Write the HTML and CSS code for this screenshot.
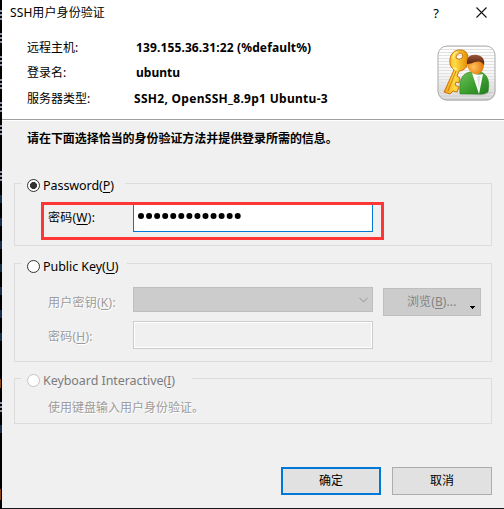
FILE: index.html
```html
<!DOCTYPE html>
<html lang="zh-CN">
<head>
<meta charset="utf-8">
<title>SSH用户身份验证</title>
<link rel="stylesheet" href="styles.css">
</head>
<body>
<div class="screen">
  <svg class="backdrop" width="2" height="509" viewBox="0 0 2 509">
    <rect width="2" height="509" fill="#000"/>
    <path d="M1 10V20M1 33V43M1 56V66M1 79V89M1 102V112M1 125V135M1 171V181M1 402V412" stroke="#8b91a8" stroke-width="2" stroke-dasharray="2 2"/>
    <path d="M1 195V203M1 218V226M1 241V249M1 264V272M1 287V295M1 310V318M1 333V341M1 425V433" stroke="#315b91" stroke-width="1"/>
    <path d="M.5 379V388M.5 489V500" stroke="#8c4313" stroke-width="1"/>
  </svg>
  <main class="dialog">
    <header class="header">
      <div class="titlebar">
        <span class="title">SSH用户身份验证</span>
        <span class="help">?</span>
        <svg class="close" width="11" height="11" viewBox="0 0 11 11"><path d="M.5.5l10 10M10.500.5l-10 10" stroke="#111" stroke-width="1.1"/></svg>
      </div>
      <div class="summary">
        <dl class="info">
          <dt>远程主机:</dt><dd class="host">139.155.36.31:22 (%default%)</dd>
          <dt>登录名:</dt><dd class="login">ubuntu</dd>
          <dt>服务器类型:</dt><dd class="server">SSH2, OpenSSH_8.9p1 Ubuntu-3</dd>
        </dl>
        <svg class="userkey" width="60" height="57" viewBox="0 0 60 57">
          <defs>
            <linearGradient id="tile" x2="0" y2="1"><stop stop-color="#fff"/><stop offset=".5" stop-color="#f7f7f7"/><stop offset="1" stop-color="#cfcfcf"/></linearGradient>
            <linearGradient id="gold"><stop stop-color="#f19a0b"/><stop offset=".45" stop-color="#ffdc45"/><stop offset="1" stop-color="#e58a00"/></linearGradient>
            <radialGradient id="face" cx=".4" cy=".6"><stop stop-color="#ffc35c"/><stop offset="1" stop-color="#e88012"/></radialGradient>
            <linearGradient id="green" x2="1" y2="1"><stop stop-color="#6fbf59"/><stop offset=".55" stop-color="#3b9e2e"/><stop offset="1" stop-color="#237c1e"/></linearGradient>
            <linearGradient id="hair" x2="0" y2="1"><stop stop-color="#9c5838"/><stop offset="1" stop-color="#54200c"/></linearGradient>
            <pattern id="lines" width="4" height="3" patternUnits="userSpaceOnUse"><path d="M0 1.500H4" stroke="#e2e2e2" stroke-width="1"/></pattern>
          </defs>
          <rect x=".7" y=".7" width="58" height="55" rx="9" fill="url(#tile)"/>
          <rect x="1" y="1" width="57" height="54" rx="9" fill="url(#lines)" stroke="#adadad"/>
          <path d="M23 49Q25 45 43 47T53 47Q50 51 38 50T23 49" fill="#9b9b9b" opacity=".5"/>
          <path fill-rule="evenodd" d="M24 5C17 4 12 10 13 18C13 21 15 23 17 25L8 45 7 47 13 49 16 46 20 47 22 42 18 40 19 37 22 38 23 33 20 31 22 26C28 26 32 20 31 13C31 8 28 5 24 5ZM23 8Q27 9 25 13Q22 16 19 13Q18 10 23 8Z" fill="url(#gold)" stroke="#c76b04" stroke-width=".9"/>
          <path d="M19 26L11 46" stroke="#d77b08" stroke-width="1"/>
          <path d="M16 14Q16 9 20 7M16 23L20 24" fill="none" stroke="#fff092" stroke-width="1.300"/>
          <path d="M23 49C22 36 24 29 33 27H44C51 30 53 37 51 47Q46 50 41 49Z" fill="url(#green)" stroke="#257d1c" stroke-width=".6"/>
          <path d="M35 28L42 49 46 29Q41 31 35 28Z" fill="#fff"/>
          <path d="M40 31L42 47 43 31" fill="#e1e1e1"/>
          <path d="M30 18C29 11 33 11 39 11C45 11 48 15 47 21C46 27 42 30 38 29C33 28 30 23 30 18Z" fill="url(#face)"/>
          <path d="M30 19C29 12 34 9 40 10C46 11 48 15 47 20Q44 15 38 17Q34 19 30 19Z" fill="url(#hair)"/>
        </svg>
      </div>
    </header>
    <p class="prompt">请在下面选择恰当的身份验证方法并提供登录所需的信息。</p>
    <section class="group password">
      <h2 class="legend"><i class="radio checked"></i><span>Password(<u>P</u>)</span></h2>
      <div class="row"><span class="label">密码(<u>W</u>):</span><div class="field active"><svg width="106" height="10" viewBox="0 0 106 10"><path d="M3 5H100" stroke="#000" stroke-width="6" stroke-linecap="round" stroke-dasharray=".01 8.050"/></svg></div></div>
      <div class="highlight"></div>
    </section>
    <section class="group public">
      <h2 class="legend"><i class="radio"></i><span>Public Key(<u>U</u>)</span></h2>
      <div class="row key"><span class="label disabled">用户密钥(<u>K</u>):</span>
        <div class="select"><svg width="9" height="6" viewBox="0 0 9 6"><path d="M.5.8l4 4 4-4" fill="none" stroke="#a6a6a6" stroke-width="1.100"/></svg></div>
        <div class="browse"><span>浏览(<u>B</u>)...</span><svg width="5" height="3" viewBox="0 0 5 3"><path d="M0 0h5v1H4v1H3v1H2V2H1V1H0z"/></svg></div>
      </div>
      <div class="row pass"><span class="label disabled">密码(<u>H</u>):</span><div class="field empty"></div></div>
    </section>
    <section class="group keyboard">
      <h2 class="legend muted"><i class="radio off"></i><span>Keyboard Interactive(<u>I</u>)</span></h2>
      <p class="note disabled">使用键盘输入用户身份验证。</p>
    </section>
    <footer class="actions"><div class="button ok">确定</div><div class="button">取消</div></footer>
  </main>
</div>
</body>
</html>
```

FILE: styles.css
```css
* { box-sizing: border-box; }
body { margin: 0; font: 12px/16px "Noto Sans", "Noto Sans CJK SC", sans-serif; color: #000; }
u { text-underline-offset: 2px; text-decoration-thickness: 1px; text-decoration-skip-ink: none; }
.screen { display: flex; width: 504px; height: 509px; overflow: hidden; background: #16161a; }
.backdrop { flex: none; display: block; }
.dialog { display: flex; flex-direction: column; width: 502px; height: 508px; background: #f0f0f0; white-space: nowrap; }
.header { height: 121px; flex: none; background: linear-gradient(#fff 119px, #a0a0a0 119px, #a0a0a0 120px, #fff 120px); }
.titlebar { display: flex; align-items: center; height: 25px; padding: 0 17px 0 8px; }
.title { flex: 1; letter-spacing: .1px; }
.help { font-size: 13px; margin-right: 37px; }
.close { display: block; }
.summary { display: flex; justify-content: space-between; padding-right: 7px; }
.info { display: grid; grid-template-columns: 107px auto; grid-template-rows: 25px 26px 26px; align-items: center; margin: 10px 0 0 25px; }
.info dt, .info dd { margin: 0; }
.info dd { font-weight: 700; padding-left: 2px; }
.info .host { letter-spacing: .12px; }
.info .server { padding-left: 0; letter-spacing: .29px; }
.userkey { display: block; margin-top: 20px; }
.prompt { margin: 10px 0 0 25px; height: 16px; font-weight: 700; letter-spacing: -.05px; }
.group { position: relative; margin: 0 12px 0 12px; border: 1px solid #dcdcdc; flex: none; }
.password { height: 63px; margin-top: 36px; }
.public { height: 99px; margin-top: 17px; }
.keyboard { height: 46px; margin-top: 16px; }
.legend { display: flex; align-items: center; width: 104px; height: 17px; margin: -7px 0 0 6px; padding-left: 6px; gap: 3px; font: inherit; font-size: 12.5px; letter-spacing: -.06px; background: #f0f0f0; }
.public .legend { width: 106px; margin-top: -6px; }
.keyboard .legend { width: 171px; }
.muted { color: #7c7c7c; }
.radio { flex: none; width: 13px; height: 13px; border: 1px solid #333; border-radius: 50%; background: #fff; }
.radio.checked { background: radial-gradient(circle, #333 3.200px, #fff 3.800px); }
.radio.off { border-color: #c4c4c4; }
.row { display: flex; padding-left: 33px; }
.label { width: 85px; letter-spacing: .25px; }
.disabled { color: #9c9c9c; text-shadow: 1px 1px #fff; }
.password .row { margin-top: 10px; align-items: center; }
.field { width: 240px; height: 28px; border: 1px solid #ccc; }
.active { display: flex; align-items: center; padding-left: 4px; background: #fff; border-color: #0078d7; }
.active svg { margin-top: -4px; }
.highlight { position: absolute; left: 26px; top: 18px; width: 343px; height: 38px; border: 3px solid #ff3636; }
.key { margin-top: 12px; }
.key .label, .pass .label { padding-top: 8px; }
.select { display: flex; align-items: center; justify-content: flex-end; width: 240px; height: 25px; padding-right: 4px; border: 1px solid #bfbfbf; background: #ccc; }
.browse { display: flex; align-items: center; width: 98px; height: 28px; margin: 1px 0 0 10px; padding-left: 23px; border: 1px solid #bfbfbf; background: #ccc; color: #838383; letter-spacing: .1px; }
.browse svg { margin: 11px 0 0 14px; }
.pass { margin-top: 5px; }
.empty { box-shadow: inset 0 0 0 1px #fff; }
.note { margin: 11px 0 0 33px; }
.actions { display: flex; justify-content: flex-end; gap: 11px; margin: 43px 12px 0; }
.button { display: flex; align-items: center; justify-content: center; width: 100px; height: 28px; border: 1px solid #adadad; background: #e1e1e1; }
.ok { border: 2px solid #0078d7; }
```
